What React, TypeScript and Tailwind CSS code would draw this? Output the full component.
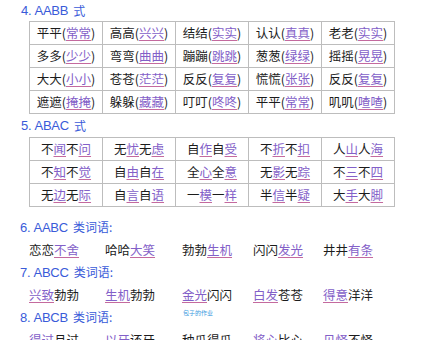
import React from "react";

const cjk = { fontFamily: '"Noto Sans CJK SC", "Noto Sans", sans-serif' };
const title = { fontFamily: '"Liberation Sans Narrow", "Liberation Sans", "Noto Sans CJK SC", sans-serif' };

const P = ({ c }: { c: string }) => (
  <span className="text-[#8360c8] underline decoration-[#c46a9e] decoration-1 underline-offset-2">{c}</span>
);

const t1: [string, string][][] = [
  [["平平", "常常"], ["高高", "兴兴"], ["结结", "实实"], ["认认", "真真"], ["老老", "实实"]],
  [["多多", "少少"], ["弯弯", "曲曲"], ["蹦蹦", "跳跳"], ["葱葱", "绿绿"], ["摇摇", "晃晃"]],
  [["大大", "小小"], ["苍苍", "茫茫"], ["反反", "复复"], ["慌慌", "张张"], ["反反", "复复"]],
  [["遮遮", "掩掩"], ["躲躲", "藏藏"], ["叮叮", "咚咚"], ["平平", "常常"], ["叽叽", "喳喳"]],
];

const t2: string[][] = [
  ["不闻不问", "无忧无虑", "自作自受", "不折不扣", "人山人海"],
  ["不知不觉", "自由自在", "全心全意", "无影无踪", "不三不四"],
  ["无边无际", "自言自语", "一模一样", "半信半疑", "大手大脚"],
];

const Title = ({ n, pat, rest }: { n: string; pat: string; rest: string }) => (
  <div className="h-[22.5px] flex items-center pl-[20px] text-[#3a5bd9]">
    <span style={title} className="text-[13px] tracking-[-0.3px]">{n}.&nbsp;{pat}&nbsp;</span>
    <span style={cjk} className="text-[12px] ml-[2px]">{rest}</span>
  </div>
);

type W = { a: string; p: boolean }[];
const WordRow = ({ words }: { words: W[] }) => (
  <div className="h-[22.5px] grid grid-cols-[76px_77px_71px_70px_auto] pl-[29px] items-center text-[12.5px] text-[#1c1c1c]" style={cjk}>
    {words.map((w, i) => (
      <div key={i} className="whitespace-nowrap leading-none">
        {w.map((s, j) => (s.p ? <P key={j} c={s.a} /> : <span key={j}>{s.a}</span>))}
      </div>
    ))}
  </div>
);

export default function App() {
  return (
    <div className="w-[424px] h-[340px] overflow-hidden bg-white">
      <div className="h-[21px] flex items-end pb-[1px] pl-[21px] text-[#3a5bd9]">
        <span style={title} className="text-[13px] tracking-[-0.3px]">4.&nbsp;AABB&nbsp;</span>
        <span style={cjk} className="text-[12px] ml-[2px]">式</span>
      </div>
      <div className="ml-[29px] w-[366px] grid grid-cols-[repeat(5,72px)] gap-px p-px bg-[#bdbdbd]" style={cjk}>
        {t1.flat().map(([a, b], i) => (
          <div key={i} className="h-[22px] bg-white flex items-center justify-center text-[12.5px] text-[#1c1c1c] leading-none whitespace-nowrap">
            {a}(<P c={b} />)
          </div>
        ))}
      </div>
      <div className="h-[23px] flex items-end pb-[2px] pl-[21px] text-[#3a5bd9]">
        <span style={title} className="text-[13px] tracking-[-0.3px]">5.&nbsp;ABAC&nbsp;</span>
        <span style={cjk} className="text-[12px] ml-[2px]">式</span>
      </div>
      <div className="ml-[29px] w-[366px] grid grid-cols-[repeat(5,72px)] gap-px p-px bg-[#bdbdbd]" style={cjk}>
        {t2.flat().map((w, i) => (
          <div key={i} className="h-[22px] bg-white flex items-center justify-center text-[12.5px] text-[#1c1c1c] leading-none whitespace-nowrap">
            <span>{w[0]}</span>
            <P c={w[1]} />
            <span>{w[2]}</span>
            <P c={w[3]} />
          </div>
        ))}
      </div>
      <div className="h-[9px]" />
      <Title n="6" pat="AABC" rest="类词语:" />
      <WordRow
        words={[
          [{ a: "恋恋", p: false }, { a: "不舍", p: true }],
          [{ a: "哈哈", p: false }, { a: "大笑", p: true }],
          [{ a: "勃勃", p: false }, { a: "生机", p: true }],
          [{ a: "闪闪", p: false }, { a: "发光", p: true }],
          [{ a: "井井", p: false }, { a: "有条", p: true }],
        ]}
      />
      <Title n="7" pat="ABCC" rest="类词语:" />
      <WordRow
        words={[
          [{ a: "兴致", p: true }, { a: "勃勃", p: false }],
          [{ a: "生机", p: true }, { a: "勃勃", p: false }],
          [{ a: "金光", p: true }, { a: "闪闪", p: false }],
          [{ a: "白发", p: true }, { a: "苍苍", p: false }],
          [{ a: "得意", p: true }, { a: "洋洋", p: false }],
        ]}
      />
      <div className="relative">
        <Title n="8" pat="ABCB" rest="类词语:" />
        <span className="absolute left-[183px] top-[4px] text-[6px] leading-none text-[#3b9be0]" style={cjk}>包子的作业</span>
      </div>
      <WordRow
        words={[
          [{ a: "得过", p: true }, { a: "且过", p: false }],
          [{ a: "以牙", p: true }, { a: "还牙", p: false }],
          [{ a: "种瓜", p: false }, { a: "得瓜", p: false }],
          [{ a: "将心", p: true }, { a: "比心", p: false }],
          [{ a: "见怪", p: true }, { a: "不怪", p: false }],
        ]}
      />
    </div>
  );
}
